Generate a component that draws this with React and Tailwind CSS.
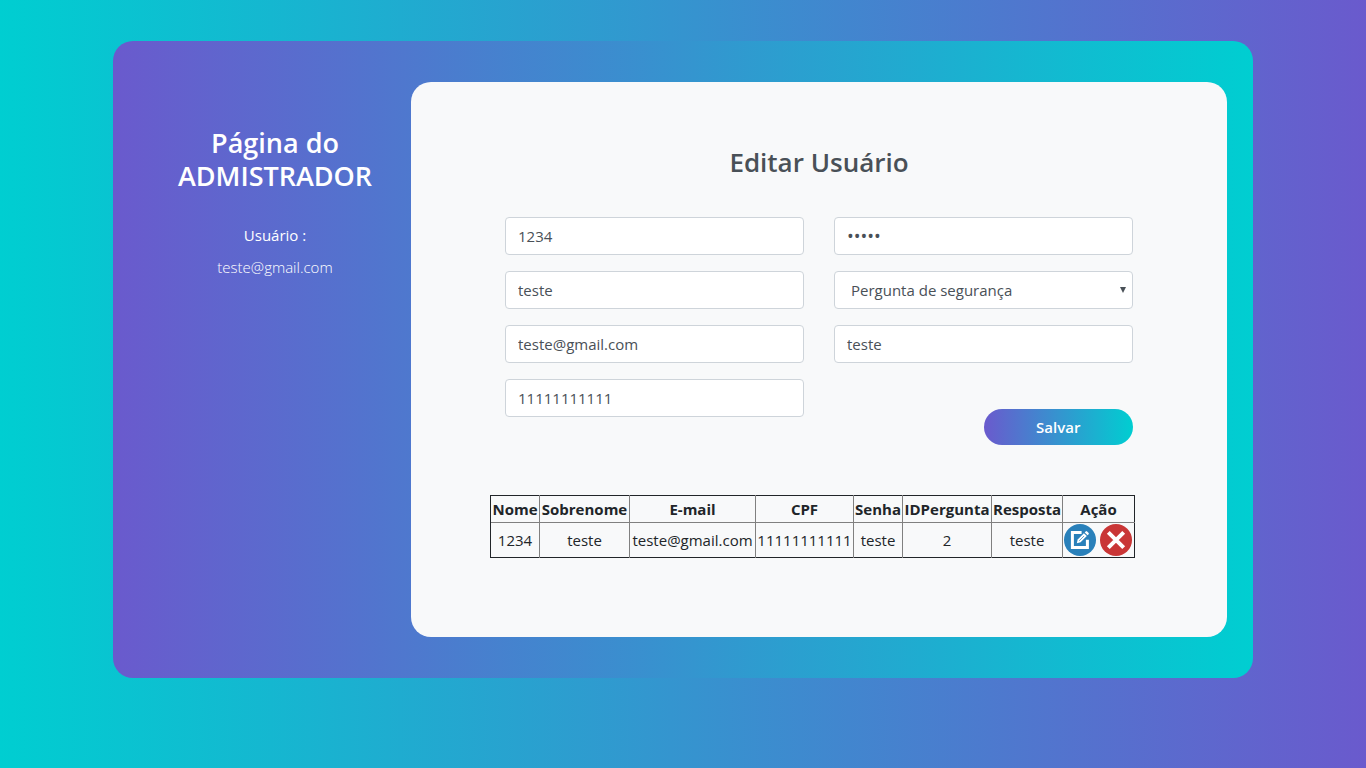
import React from "react";

const fieldClass =
  "block h-[38px] w-full rounded-[4px] border border-[#ced4da] bg-white px-3 leading-6 text-[#495057] outline-none focus:border-[#80bdff]";

function Field({ label, type = "text", value }) {
  const size = type === "password" ? "text-[18px]" : "text-[15px]";
  return <input aria-label={label} type={type} defaultValue={value} className={`${fieldClass} ${size}`} />;
}

function EditIcon() {
  return (
    <svg viewBox="0 0 32 32" className="size-8" aria-hidden="true">
      <circle cx="16" cy="16" r="16" fill="#2980ba" />
      <path d="M17.6 8.6H8.4v14.8h15v-7.6" fill="none" stroke="#fff" strokeWidth="3" />
      <path d="M12.8 19.2l0.9-3.8 6.2-6.2 2.9 2.9-6.2 6.2z" fill="#fff" />
      <path d="M20.7 8.4l1-1q.7-.6 1.4 0l1.5 1.5q.6.7 0 1.4l-1 1z" fill="#fff" />
      <path d="M15.2 16.8l4.8-4.8" stroke="#2980ba" strokeWidth="0.7" />
    </svg>
  );
}

function DeleteIcon() {
  return (
    <svg viewBox="0 0 32 32" className="size-8" aria-hidden="true">
      <circle cx="16" cy="16" r="16" fill="#c93636" />
      <path d="M8.3 8.3l15.4 15.4M23.7 8.3L8.3 23.7" stroke="#fff" strokeWidth="4" />
    </svg>
  );
}

const columns = [
  { name: "Nome", width: "w-[49px]" },
  { name: "Sobrenome", width: "w-[90px]" },
  { name: "E-mail", width: "w-[126px]" },
  { name: "CPF", width: "w-[98px]" },
  { name: "Senha", width: "w-[49px]" },
  { name: "IDPergunta", width: "w-[89px]" },
  { name: "Resposta", width: "w-[71px]" },
  { name: "Ação", width: "w-[72px]" },
];

const user = ["1234", "teste", "teste@gmail.com", "11111111111", "teste", "2", "teste"];

export default function App() {
  return (
    <div className="min-h-screen bg-[linear-gradient(to_right,#00ced1,#6a5acd)] pt-[41px] pb-[90px] font-['Open_Sans','Noto_Sans',sans-serif] text-[15px] leading-6 text-[#212529]">
      <div className="mx-auto flex max-w-[1140px] rounded-[20px] bg-[linear-gradient(to_right,#6a5acd,#00ced1)] px-[26px] py-[41px]">
        <aside className="w-1/4 shrink-0 pt-11 text-center text-white">
          <h1 className="text-[27px] leading-[33px] font-semibold">
            Página do
            <br />
            ADMISTRADOR
          </h1>
          <p className="mt-[31px]">Usuário :</p>
          <p className="mt-2 font-light">teste@gmail.com</p>
        </aside>

        <main className="flex min-w-0 flex-1 flex-col rounded-[20px] bg-[#f8f9fa] pt-16 pb-[79px]">
          <h2 className="text-center text-[26px] leading-[33px] font-semibold text-[#495057]">Editar Usuário</h2>
          <form className="mx-[94px] mt-[38px] grid grid-cols-2 gap-[30px]" onSubmit={(e) => e.preventDefault()}>
            <div className="flex flex-col gap-4">
              <Field label="Nome" value="1234" />
              <Field label="Sobrenome" value="teste" />
              <Field label="E-mail" type="email" value="teste@gmail.com" />
              <Field label="CPF" value="11111111111" />
            </div>
            <div className="flex flex-col gap-4">
              <Field label="Senha" type="password" value="teste" />
              <div className="relative">
                <select
                  aria-label="Pergunta de segurança"
                  className="block h-[38px] w-full appearance-none rounded-[4px] border border-[#ced4da] bg-white px-4 text-[15px] leading-6 text-[#495057]"
                >
                  <option>Pergunta de segurança</option>
                </select>
                <svg
                  viewBox="0 0 6 6"
                  className="pointer-events-none absolute top-4 right-[7px] size-[6px] fill-[#495057]"
                  aria-hidden="true"
                >
                  <path d="M0 0h6L3 6z" />
                </svg>
              </div>
              <Field label="Resposta" value="teste" />
              <button
                type="submit"
                className="mt-[30px] h-9 w-1/2 self-end rounded-full bg-[linear-gradient(to_right,#6a5acd,#00ced1)] text-[15px] font-semibold text-white"
              >
                Salvar
              </button>
            </div>
          </form>

          <table className="mt-[50px] ml-[79px] w-[645px] table-fixed border-collapse self-start border border-[#212529] text-center">
            <thead>
              <tr className="h-[27px] border-b border-[#808080]">
                {columns.map((c) => (
                  <th key={c.name} className={`${c.width} border-l border-[#808080] p-0 font-bold first:border-l-[#212529]`}>
                    {c.name}
                  </th>
                ))}
              </tr>
            </thead>
            <tbody>
              <tr className="h-[35px]">
                {user.map((v, i) => (
                  <td key={i} className="border-l border-[#808080] p-0 first:border-l-[#212529]">
                    {v}
                  </td>
                ))}
                <td className="border-l border-[#808080] p-0">
                  <div className="flex gap-1 pl-px">
                    <button type="button" aria-label="Editar">
                      <EditIcon />
                    </button>
                    <button type="button" aria-label="Excluir">
                      <DeleteIcon />
                    </button>
                  </div>
                </td>
              </tr>
            </tbody>
          </table>
        </main>
      </div>
    </div>
  );
}
